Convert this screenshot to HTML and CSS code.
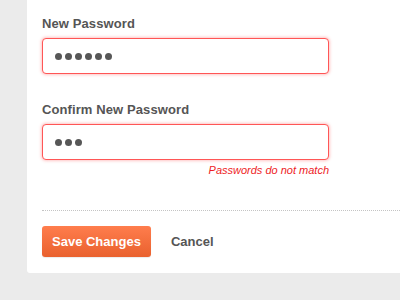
FILE: index.html
```html
<!DOCTYPE html>
<html>
<head>
<meta charset="utf-8">
<link rel="stylesheet" href="styles.css">
</head>
<body>
<div class="panel">
  <div class="field">
    <label class="label">New Password</label>
    <div class="input"><span class="dot"></span><span class="dot"></span><span class="dot"></span><span class="dot"></span><span class="dot"></span><span class="dot"></span></div>
  </div>
  <div class="field second">
    <label class="label">Confirm New Password</label>
    <div class="input"><span class="dot"></span><span class="dot"></span><span class="dot"></span></div>
    <div class="error">Passwords do not match</div>
  </div>
  <div class="actions">
    <button class="save">Save Changes</button>
    <a class="cancel">Cancel</a>
  </div>
</div>
</body>
</html>
```
FILE: styles.css
```css
html, body {
  margin: 0;
  padding: 0;
  background: #ebebeb;
  height: 300px;
  overflow: hidden;
}
body {
  font-family: "Liberation Sans", Arial, sans-serif;
}
.panel {
  margin-left: 27px;
  background: #fff;
  border-bottom-left-radius: 3px;
  padding: 16px 0 16px 15px;
}
.field {
  width: 287px;
  display: flex;
  flex-direction: column;
}
.second {
  margin-top: 28px;
}
.label {
  font-size: 13px;
  line-height: 16px;
  font-weight: bold;
  color: #555;
  margin-bottom: 6px;
  letter-spacing: 0.1px;
}
.input {
  box-sizing: border-box;
  height: 36px;
  border: 1px solid #ff5656;
  border-radius: 4px;
  box-shadow: 0 0 3px 1px rgba(255, 90, 90, 0.35);
  background: #fff;
  display: flex;
  align-items: center;
  gap: 3px;
  padding-left: 12px;
}
.dot {
  width: 7px;
  height: 7px;
  border-radius: 50%;
  background: #575757;
}
.error {
  margin-top: 4px;
  text-align: right;
  font-size: 11px;
  line-height: 13px;
  font-style: italic;
  color: #ee1c25;
}
.actions {
  margin-top: 33px;
  border-top: 1px dotted #c4c4c4;
  padding-top: 15px;
  display: flex;
  align-items: center;
  gap: 20px;
}
.save {
  height: 31px;
  padding: 0 10px;
  border: none;
  border-radius: 3px;
  background: linear-gradient(#ff7d4d, #e9612e);
  color: #fff;
  font-family: "Liberation Sans", Arial, sans-serif;
  font-size: 13px;
  font-weight: bold;
  box-shadow: 0 1px 1px rgba(0,0,0,0.08);
}
.cancel {
  font-size: 13px;
  font-weight: bold;
  color: #555;
}
```
